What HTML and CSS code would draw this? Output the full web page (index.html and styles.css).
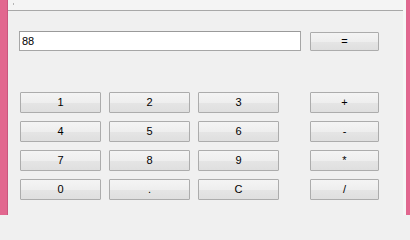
FILE: index.html
```html
<!DOCTYPE html>
<html>
<head>
<meta charset="utf-8">
<link rel="stylesheet" href="styles.css">
</head>
<body>
<div class="window">
  <div class="edge-left"></div>
  <div class="main">
    <div class="topband"><span class="grip"></span></div>
    <div class="content">
      <div class="display-row">
        <input class="display" type="text" value="88">
        <button class="btn op">=</button>
      </div>
      <div class="keypad">
        <button class="btn">1</button><button class="btn">2</button><button class="btn">3</button><button class="btn op">+</button>
        <button class="btn">4</button><button class="btn">5</button><button class="btn">6</button><button class="btn op">-</button>
        <button class="btn">7</button><button class="btn">8</button><button class="btn">9</button><button class="btn op">*</button>
        <button class="btn">0</button><button class="btn">.</button><button class="btn">C</button><button class="btn op">/</button>
      </div>
    </div>
  </div>
  <div class="edge-right"></div>
</div>
</body>
</html>
```

FILE: styles.css
```css
html, body {
  margin: 0;
  padding: 0;
  background: #f0f0f0;
}
.window {
  display: flex;
  width: 410px;
  height: 215px;
  font-family: "Liberation Sans", Arial, sans-serif;
  font-size: 11px;
  color: #000;
}
.edge-left {
  width: 7px;
  background: #e2678f;
  border-right: 1px solid #c9577e;
}
.edge-right {
  width: 4px;
  background: #e2678f;
}
.main {
  flex: 1;
  display: flex;
  flex-direction: column;
  background: #f0f0f0;
  border-right: 3px solid #f6f6f6;
}
.topband {
  height: 10px;
  background: #f4f4f4;
  border-bottom: 1px solid #a8a8a8;
  position: relative;
}
.grip {
  position: absolute;
  left: 5px;
  top: 3px;
  width: 1px;
  height: 2px;
  background: #b4b4b4;
}
.content {
  padding: 20px 0 0 11px;
}
.display-row {
  display: flex;
  align-items: flex-start;
  gap: 9px;
}
.display {
  box-sizing: border-box;
  width: 282px;
  height: 20px;
  margin: 0;
  padding: 0 0 0 2px;
  border: 1px solid #a6a6a6;
  border-top-color: #9a9a9a;
  background: #fff;
  font-family: "Liberation Sans", Arial, sans-serif;
  font-size: 11px;
  color: #000;
  outline: none;
}
.btn {
  box-sizing: border-box;
  height: 21px;
  margin: 0;
  padding: 0;
  border: 1px solid #acacac;
  border-radius: 1px;
  background: linear-gradient(#f4f4f4 0%, #eeeeee 50%, #e5e5e5 51%, #dfdfdf 100%);
  font-family: "Liberation Sans", Arial, sans-serif;
  font-size: 11px;
  color: #000;
  line-height: 19px;
  text-align: center;
}
.display-row .btn {
  width: 69px;
  height: 19px;
  line-height: 17px;
  margin-top: 1px;
}
.keypad {
  margin: 41px 0 0 1px;
  display: grid;
  grid-template-columns: 81px 81px 81px 92px;
  grid-auto-rows: 21px;
  column-gap: 8px;
  row-gap: 8px;
}
.keypad .op {
  justify-self: end;
  width: 69px;
}
```
